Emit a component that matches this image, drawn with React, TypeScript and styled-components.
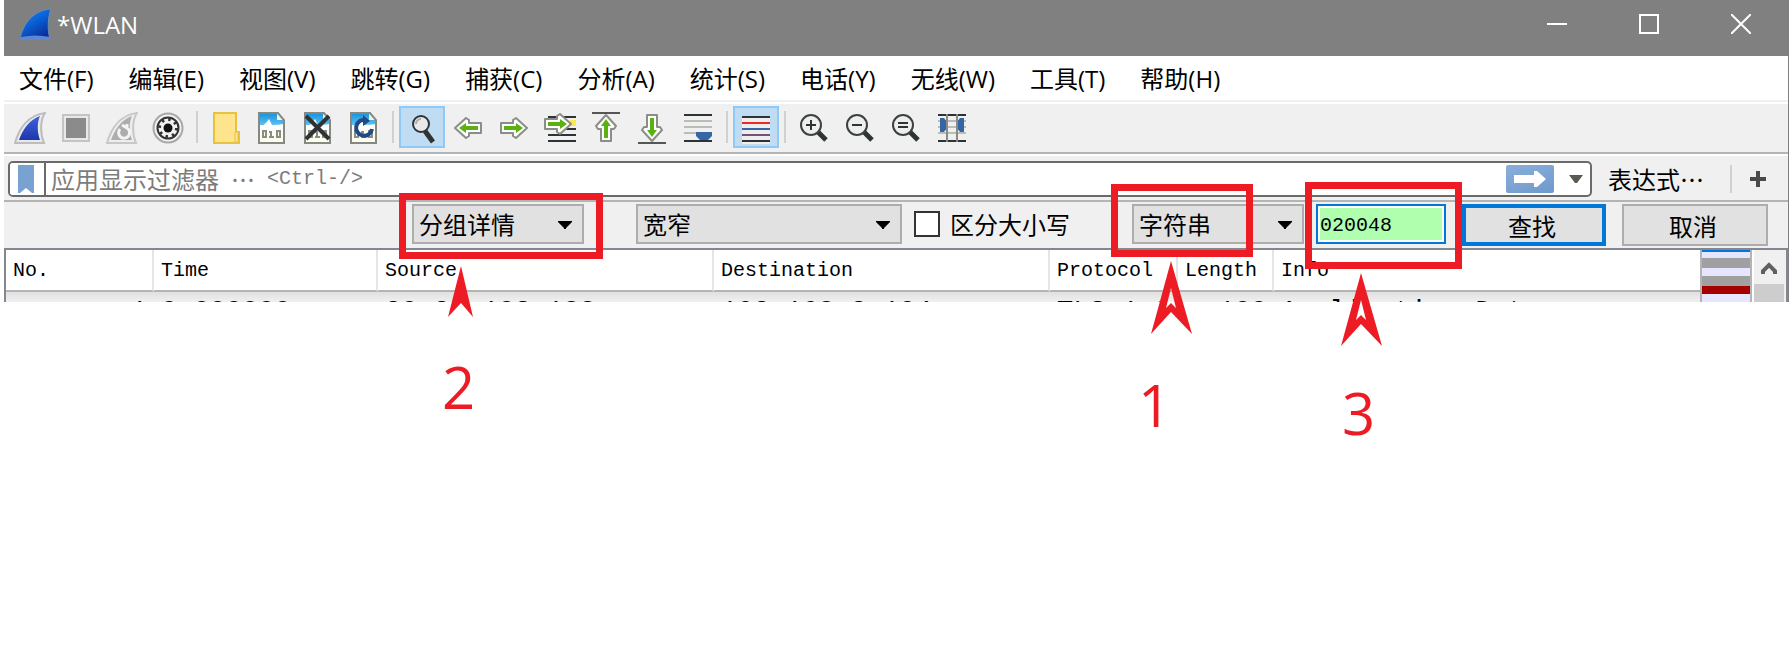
import React from 'react';
import styled, { createGlobalStyle } from 'styled-components';

const sans = `"Open Sans", "Noto Sans CJK SC", sans-serif`;
const mono = `"Liberation Mono", "Noto Sans CJK SC", monospace`;
const cjk = `"Noto Sans CJK SC", sans-serif`;
const markRed = '#ed1c24';

const GlobalStyle = createGlobalStyle`
  * { box-sizing: border-box; }
  body { margin: 0; background: #fff; color: #000; font-family: ${sans}; }
  button, select, input { font: inherit; color: inherit; margin: 0; border-radius: 0; }
  svg { display: block; flex: none; }
`;

const Page = styled.div`
  min-height: 100vh;
  padding: 0 3px 0 4px;
`;

const Window = styled.div`
  background: #f0f0f0;
`;

const TitleBar = styled.header`
  display: flex;
  align-items: flex-start;
  height: 56px;
  padding: 8px 22px 0 15px;
  background: #808080;
  color: #fff;
`;

const Title = styled.h1`
  flex: 1;
  margin: 0 0 0 6px;
  font-size: 24px;
  line-height: 34px;
  font-weight: 400;
`;

const CaptionButton = styled.button`
  width: 92px;
  height: 32px;
  padding: 0;
  border: 0;
  background: none;
  display: flex;
  align-items: center;
  justify-content: center;
  &:last-child { width: 72px; justify-content: flex-end; padding-right: 16px; }
`;

const Body = styled.main`
  border-right: 1px solid #808080;
`;

const MenuBar = styled.nav`
  display: flex;
  gap: 35px;
  height: 48px;
  padding: 0 15px;
  background: #fff;
  border-bottom: 2px solid #fff;
  box-shadow: inset 0 -2px 0 #f0f0f0;
`;

const MenuItem = styled.button`
  border: 0;
  padding: 0;
  background: none;
  font-size: 24px;
  line-height: 44px;
  white-space: nowrap;
`;

const ToolBar = styled.div`
  display: flex;
  align-items: center;
  height: 50px;
  padding: 0 3px 2px;
  border-bottom: 2px solid #b4b4b4;
`;

const Tool = styled.button<{ $active?: boolean }>`
  display: flex;
  align-items: center;
  justify-content: center;
  width: 46px;
  height: 42px;
  padding: 2px 0 0;
  border: 2px solid ${(p) => (p.$active ? '#90c8f6' : 'transparent')};
  background: ${(p) => (p.$active ? '#c0dcf3' : 'transparent')};
`;

const Divider = styled.span<{ $gap: number; $tall: number }>`
  width: 2px;
  height: ${(p) => p.$tall}px;
  margin: 0 ${(p) => p.$gap}px;
  background: #d0d0d0;
`;

const FilterBar = styled.div`
  display: flex;
  align-items: center;
  height: 48px;
  padding: 2px 22px 0 4px;
  border-top: 2px solid #fff;
  border-bottom: 2px solid #b4b4b4;
`;

const FilterBox = styled.div`
  position: relative;
  flex: 1;
  display: flex;
  align-items: center;
  height: 36px;
  border: 2px solid #6a6a6a;
  border-radius: 5px;
  background: #fff;
  overflow: hidden;
`;

const Bookmark = styled.button`
  display: flex;
  align-items: center;
  justify-content: center;
  width: 36px;
  height: 32px;
  padding: 0 2px 0 0;
  border: 0;
  border-right: 2px solid #6a6a6a;
  background: #fff;
`;

const FilterInput = styled.input`
  flex: 1;
  min-width: 0;
  height: 32px;
  padding: 0 6px;
  border: 0;
  outline: 0;
  background: transparent;
  font-family: ${mono};
  font-size: 24px;
`;

const FilterHint = styled.label`
  position: absolute;
  left: 41px;
  display: flex;
  gap: 12px;
  font-family: ${cjk};
  font-size: 24px;
  line-height: 32px;
  color: #7c7c7c;
  white-space: nowrap;
`;

const Keys = styled.span`
  font-family: ${mono};
  font-size: 20px;
`;

const Apply = styled.button`
  display: flex;
  align-items: center;
  justify-content: center;
  width: 48px;
  height: 28px;
  padding: 0;
  border: 0;
  border-radius: 2px;
  background: linear-gradient(160deg, #8aaedb, #6f9acb);
`;

const History = styled.button`
  width: 36px;
  height: 32px;
  padding: 0 6px 0 14px;
  border: 0;
  background: none;
`;

const Expression = styled.button`
  margin: 0 8px 0 16px;
  padding: 0;
  border: 0;
  background: none;
  font-family: ${cjk};
  font-size: 24px;
  line-height: 36px;
`;

const AddFilter = styled.button`
  padding: 0;
  border: 0;
  background: none;
`;

const SearchBar = styled.form`
  display: flex;
  justify-content: flex-end;
  align-items: flex-start;
  height: 46px;
  padding: 2px 20px 0 0;
`;

const Field = styled.div<{ $width: number; $before: number }>`
  position: relative;
  width: ${(p) => p.$width}px;
  margin-left: ${(p) => p.$before}px;
`;

const Select = styled.select`
  appearance: none;
  display: block;
  width: 100%;
  height: 40px;
  padding: 0 30px 0 5px;
  border: 2px solid #adadad;
  background: #e1e1e1;
  font-family: ${cjk};
  font-size: 24px;
  line-height: 36px;
`;

const Caret = styled.svg`
  position: absolute;
  right: 12px;
  top: 16px;
  pointer-events: none;
`;

const CheckLabel = styled.label`
  display: flex;
  align-items: center;
  gap: 10px;
  height: 40px;
  margin-left: 12px;
  font-family: ${cjk};
  font-size: 24px;
  line-height: 36px;
`;

const CheckBox = styled.input`
  appearance: none;
  width: 26px;
  height: 26px;
  border: 2px solid #333;
  background: #fff;
`;

const SearchInput = styled.input`
  display: block;
  width: 100%;
  height: 40px;
  padding: 2px 2px 0;
  border: 2px solid #0078d7;
  outline: 0;
  background: #afffaf;
  box-shadow: inset 0 0 0 2px #fff;
  font-family: ${mono};
  font-size: 20px;
`;

const PushButton = styled.button<{ $primary?: boolean }>`
  width: ${(p) => (p.$primary ? 144 : 146)}px;
  height: 42px;
  margin-left: 16px;
  padding: 2px 4px 0 0;
  border: ${(p) => (p.$primary ? '4px solid #0078d7' : '2px solid #adadad')};
  background: #e1e1e1;
  font-family: ${cjk};
  font-size: 24px;
  line-height: 32px;
`;

/* Red call-outs anchored to the search fields they explain. */
const Frame = styled.span<{ $t: number; $l: number; $w: number; $h: number }>`
  position: absolute;
  z-index: 2;
  top: ${(p) => p.$t}px;
  left: ${(p) => p.$l}px;
  width: ${(p) => p.$w}px;
  height: ${(p) => p.$h}px;
  border: 7px solid ${markRed};
  pointer-events: none;
`;

const Pointer = styled.svg<{ $t: number; $l: number }>`
  position: absolute;
  z-index: 2;
  top: ${(p) => p.$t}px;
  left: ${(p) => p.$l}px;
  fill: ${markRed};
  pointer-events: none;
`;

const Step = styled.span<{ $t: number; $l: number }>`
  position: absolute;
  z-index: 2;
  top: ${(p) => p.$t}px;
  left: ${(p) => p.$l}px;
  color: ${markRed};
  font-size: 58px;
  line-height: 60px;
`;

const PacketPane = styled.section`
  display: flex;
  height: 54px;
  border: 2px solid #828790;
  border-bottom: 0;
  overflow: hidden;
`;

const PacketTable = styled.table`
  flex: 1;
  table-layout: fixed;
  border-collapse: separate;
  border-spacing: 0;
  background: linear-gradient(#e0e0e0, #f0f0f0) 0 42px / 100% 10px no-repeat;
`;

const HeadCell = styled.th<{ $width?: number }>`
  width: ${(p) => (p.$width ? `${p.$width}px` : 'auto')};
  height: 42px;
  padding: 5px 0 3px 7px;
  border-right: 2px solid #e5e5e5;
  border-bottom: 2px solid #b4b4b4;
  background: #fff;
  font: 400 20px/32px ${mono};
  text-align: left;
  white-space: nowrap;
  &:last-child { border-right: 0; }
`;

const Cell = styled.td<{ $right?: boolean }>`
  padding: 5px 7px 0;
  font: 400 27px/30px ${mono};
  text-align: ${(p) => (p.$right ? 'right' : 'left')};
  vertical-align: top;
  white-space: nowrap;
`;

const MiniMap = styled.div`
  width: 52px;
  height: 52px;
  border: solid #b4b4b4;
  border-width: 0 2px;
  background: linear-gradient(
    #0078d7 0 2px, #e6e6ff 2px 8px, #a0a0a0 8px 18px, #e6e6ff 18px 26px,
    #a0a0a0 26px 36px, #a40000 36px 44px, #e6e6ff 44px
  );
`;

const ScrollBar = styled.div`
  width: 34px;
  border-left: 2px solid #fff;
`;

const ScrollUp = styled.button`
  display: flex;
  align-items: center;
  justify-content: center;
  width: 30px;
  height: 34px;
  padding: 4px 0 0;
  border: 0;
  background: none;
`;

const Thumb = styled.div`
  width: 30px;
  height: 18px;
  background: #cdcdcd;
`;

const Icon = ({ children }: { children: React.ReactNode }) => (
  <svg width="32" height="32" viewBox="0 0 32 32" aria-hidden="true">{children}</svg>
);

const finPath = 'M1 31C5 17 14 3 31 1C26 8 26 22 30 31Z';
const finInner = 'M5 28C9 17 15 8 26 4C23 10 23 20 26 28Z';

const TitleFin = () => (
  <Icon>
    <defs>
      <linearGradient id="fin" x1="0" y1="0" x2="0.6" y2="1">
        <stop offset="0" stopColor="#1c86f0" /><stop offset="0.5" stopColor="#0a62d8" /><stop offset="1" stopColor="#0a2f9c" />
      </linearGradient>
    </defs>
    <path d="M1 31C4 16 14 2 32 1C29 8 28 22 31 31Z" fill="url(#fin)" stroke="#6c8fae" />
    <path d="M2 29Q16 26 31 29V32H1Z" fill="#5c86d6" />
  </Icon>
);

const StartIcon = () => (
  <Icon>
    <defs>
      <linearGradient id="start" x1="0" y1="0" x2="0" y2="1">
        <stop offset="0" stopColor="#3f62dd" /><stop offset="1" stopColor="#1e37ab" />
      </linearGradient>
    </defs>
    <path d={finPath} fill="#e9e9e9" stroke="#bdbdbd" strokeWidth="2" />
    <path d={finInner} fill="url(#start)" />
  </Icon>
);

const StopIcon = () => (
  <Icon>
    <rect x="3" y="3" width="26" height="26" fill="#e8e8e8" stroke="#c4c4c4" strokeWidth="2" />
    <rect x="6" y="6" width="20" height="20" fill="#8b8b8b" />
  </Icon>
);

const RestartIcon = () => (
  <Icon>
    <path d={finPath} fill="#eee" stroke="#c8c8c8" strokeWidth="2" />
    <path d={finInner} fill="#adadad" />
    <path d="M14 17A5.500 5.500 0 1 0 21 16M21 16V12M21 16L16 13" fill="none" stroke="#f4f4f4" strokeWidth="3" />
  </Icon>
);

const OptionsIcon = () => (
  <Icon>
    <circle cx="16" cy="16" r="14.500" fill="#f2f2f2" stroke="#a8a8a8" strokeWidth="2" />
    <circle cx="16" cy="16" r="10.500" fill="none" stroke="#333" strokeWidth="2" />
    <circle cx="16" cy="16" r="8.500" fill="none" stroke="#333" strokeWidth="3" strokeDasharray="2.500 4.170" />
    <circle cx="16" cy="16" r="4.500" fill="#111" />
  </Icon>
);

const FolderIcon = () => (
  <Icon>
    <path d="M4 1H26V20H29V31H4Z" fill="#ffe48e" stroke="#e8c23e" strokeWidth="2" />
    <path d="M25 30V20H28V30Z" fill="#ffe48e" stroke="#e8c23e" />
  </Icon>
);

const Sheet = ({ children }: { children: React.ReactNode }) => (
  <Icon>
    <defs>
      <linearGradient id="sheet" x1="0" y1="0" x2="0" y2="1">
        <stop offset="0" stopColor="#1591db" /><stop offset="1" stopColor="#5fc0f2" />
      </linearGradient>
    </defs>
    <path d="M3 1H22L28 8V31H3Z" fill="#fdfdf0" />
    <path d="M3 1H22L28 8V13H3Z" fill="url(#sheet)" />
    <path d="M3 16Q9 13 13 7L16 13Q22 13 28 12V17H3Z" fill="#fff" />
    <path d="M21 1V8H28Z" fill="#f4f4da" />
    <path d="M3 1H22L28 8V31H3Z" fill="none" stroke="#868882" strokeWidth="2" />
    {children}
  </Icon>
);

const Bits = () => (
  <g fill="none" stroke="#8c8c84" strokeWidth="2">
    <rect x="7" y="19" width="3" height="6" />
    <path d="M13 20H15V25M13 25H18" />
    <rect x="21" y="19" width="3" height="6" />
  </g>
);

const FindIcon = () => (
  <Icon>
    <path d="M19 19L27 30" stroke="#2e3436" strokeWidth="5" />
    <circle cx="15" cy="12" r="8" fill="#e8e9ea" stroke="#2e3436" strokeWidth="2" />
    <path d="M10 12A5 5 0 0 1 15 7" fill="none" stroke="#aaa" strokeWidth="2" />
  </Icon>
);

const Arrow = ({ turn = 0, x = 0, y = 0 }: { turn?: number; x?: number; y?: number }) => (
  <g transform={`translate(${x} ${y}) rotate(${turn} 16 16)`}>
    <path d="M3 11H15V8L18 6L29 16L18 26L15 24V21H3Z" fill="#fff" stroke="#8b8d87" strokeWidth="2" strokeLinejoin="round" />
    <path d="M6 14H18V11L25 16L18 21V18H6Z" fill="#5bb012" />
  </g>
);

const GotoIcon = () => (
  <Icon>
    <path d="M4 5H32M4 17H32M4 23H32M4 29H32" stroke="#2e3436" strokeWidth="2" />
    <rect x="26" y="8" width="6" height="6" fill="#fce94f" />
    <Arrow x={-2} y={-4} />
  </Icon>
);

const FirstIcon = () => (
  <Icon><path d="M2 1H30" stroke="#555753" strokeWidth="2" /><Arrow turn={-90} /></Icon>
);

const LastIcon = () => (
  <Icon><path d="M2 31H30" stroke="#555753" strokeWidth="2" /><Arrow turn={90} /></Icon>
);

const ScrollIcon = () => (
  <Icon>
    <path d="M2 3H30M2 29H30" stroke="#2e3436" strokeWidth="2" />
    <path d="M2 9H30M2 15H30M2 21H14" stroke="#babdb6" strokeWidth="2" />
    <path d="M14 20H30V24L26 28H18L14 24Z" fill="#3465a4" />
  </Icon>
);

const ColorizeIcon = () => (
  <Icon>
    <rect x="2" y="4" width="28" height="28" fill="#eeeeec" />
    <path d="M2 5H30M2 29H30" stroke="#2e3436" strokeWidth="2" />
    <path d="M2 11H30" stroke="#ef2929" strokeWidth="2" />
    <path d="M2 17H30" stroke="#3465a4" strokeWidth="2" />
    <path d="M2 23H30" stroke="#75507b" strokeWidth="2" />
  </Icon>
);

const ZoomIcon = ({ sign }: { sign: string }) => (
  <Icon>
    <path d="M20 20L28 28" stroke="#2e3436" strokeWidth="5" />
    <circle cx="13" cy="13" r="10" fill="#eeeeec" stroke="#3b4143" strokeWidth="2" />
    <path d={sign} stroke="#2e3436" strokeWidth="2" />
  </Icon>
);

const ColumnsIcon = () => (
  <Icon>
    <path d="M2 9H30M2 15H30M2 21H30" stroke="#babdb6" strokeWidth="2" />
    <path d="M2 3H30M2 29H30" stroke="#2e3436" strokeWidth="2" />
    <path d="M4 6H8L11 10V16L8 20H4ZM28 6H24L21 10V16L24 20H28Z" fill="#3465a4" />
    <path d="M11 2V30M21 2V30" stroke="#888a85" strokeWidth="2" />
  </Icon>
);

const DownCaret = () => (
  <Caret width="14" height="9" viewBox="0 0 14 9" aria-hidden="true">
    <path d="M0 1H14V2L8 8V9H6V8L0 2Z" />
  </Caret>
);

type ToolSpec = { name: string; icon: React.ReactNode; active?: boolean };

const toolGroups: ToolSpec[][] = [
  [
    { name: '开始捕获', icon: <StartIcon /> },
    { name: '停止捕获', icon: <StopIcon /> },
    { name: '重新捕获', icon: <RestartIcon /> },
    { name: '捕获选项', icon: <OptionsIcon /> },
  ],
  [
    { name: '打开', icon: <FolderIcon /> },
    { name: '保存', icon: <Sheet><Bits /></Sheet> },
    { name: '关闭文件', icon: <Sheet><Bits /><path d="M4 4L27 27M27 4L4 27" stroke="#2e3436" strokeWidth="4" /></Sheet> },
    { name: '重新加载', icon: <Sheet><Bits /><path d="M18 8A8 8 0 1 0 24 17" fill="none" stroke="#204a87" strokeWidth="4" /><path d="M15 3L22 9L15 14Z" fill="#204a87" /></Sheet> },
  ],
  [
    { name: '查找分组', icon: <FindIcon />, active: true },
    { name: '上一个', icon: <Icon><Arrow turn={180} /></Icon> },
    { name: '下一个', icon: <Icon><Arrow /></Icon> },
    { name: '转到分组', icon: <GotoIcon /> },
    { name: '首个分组', icon: <FirstIcon /> },
    { name: '最后分组', icon: <LastIcon /> },
    { name: '自动滚动', icon: <ScrollIcon /> },
  ],
  [{ name: '着色', icon: <ColorizeIcon />, active: true }],
  [
    { name: '放大', icon: <ZoomIcon sign="M8 13H18M13 8V18" /> },
    { name: '缩小', icon: <ZoomIcon sign="M8 13H18" /> },
    { name: '正常大小', icon: <ZoomIcon sign="M8 11H18M8 15H18" /> },
    { name: '调整列宽', icon: <ColumnsIcon /> },
  ],
];

const menus = ['文件(F)', '编辑(E)', '视图(V)', '跳转(G)', '捕获(C)', '分析(A)', '统计(S)', '电话(Y)', '无线(W)', '工具(T)', '帮助(H)'];

const columns: { title: string; width?: number; value: string; right?: boolean }[] = [
  { title: 'No.', width: 148, value: '1', right: true },
  { title: 'Time', width: 224, value: '0.000000' },
  { title: 'Source', width: 336, value: '20.21.103.188' },
  { title: 'Destination', width: 336, value: '192.168.2.104' },
  { title: 'Protocol', width: 128, value: 'TLSv1.2' },
  { title: 'Length', width: 96, value: '100', right: true },
  { title: 'Info', value: 'Application Data' },
];

const hollowArrow = 'M20 0L41 73L20 51L0 73ZM20 27L15 47L20 42L25 47Z';

export default function App() {
  return (
    <Page>
      <GlobalStyle />
      <Window lang="zh-CN">
        <TitleBar>
          <TitleFin />
          <Title>*WLAN</Title>
          <CaptionButton aria-label="最小化">
            <svg width="20" height="20" viewBox="0 0 20 20"><path d="M0 10H20" stroke="#fff" strokeWidth="2" /></svg>
          </CaptionButton>
          <CaptionButton aria-label="最大化">
            <svg width="20" height="20" viewBox="0 0 20 20"><rect x="1" y="1" width="18" height="18" fill="none" stroke="#fff" strokeWidth="2" /></svg>
          </CaptionButton>
          <CaptionButton aria-label="关闭">
            <svg width="20" height="20" viewBox="0 0 20 20"><path d="M0 0L20 20M20 0L0 20" stroke="#fff" strokeWidth="2" /></svg>
          </CaptionButton>
        </TitleBar>
        <Body>
          <MenuBar>
            {menus.map((m) => <MenuItem key={m}>{m}</MenuItem>)}
          </MenuBar>
          <ToolBar>
            {toolGroups.map((group, i) => (
              <React.Fragment key={i}>
                {i > 0 && <Divider $gap={5} $tall={32} />}
                {group.map((t) => (
                  <Tool key={t.name} aria-label={t.name} $active={t.active}>{t.icon}</Tool>
                ))}
              </React.Fragment>
            ))}
          </ToolBar>
          <FilterBar>
            <FilterBox>
              <Bookmark aria-label="书签">
                <svg width="16" height="28" viewBox="0 0 16 28"><path d="M0 0H16V28H14L8 23L2 28H0Z" fill="#78a2d2" /></svg>
              </Bookmark>
              <FilterInput id="display-filter" />
              <FilterHint htmlFor="display-filter">
                <span>应用显示过滤器</span><span>…</span><Keys>&lt;Ctrl-/&gt;</Keys>
              </FilterHint>
              <Apply aria-label="应用">
                <svg width="32" height="16" viewBox="0 0 32 16"><path d="M0 4H20V0H23L32 8L23 16H20V12H0Z" fill="#fff" /></svg>
              </Apply>
              <History aria-label="历史">
                <svg width="16" height="8" viewBox="0 0 16 8"><path d="M1 0H15L9 8H7Z" fill="#5a5a55" /></svg>
              </History>
            </FilterBox>
            <Expression>表达式…</Expression>
            <Divider $gap={18} $tall={28} />
            <AddFilter aria-label="添加">
              <svg width="16" height="16" viewBox="0 0 16 16"><path d="M0 8H16M8 0V16" stroke="#4a4a4a" strokeWidth="4" /></svg>
            </AddFilter>
          </FilterBar>
          <SearchBar onSubmit={(e) => e.preventDefault()}>
            <Field $width={172} $before={0}>
              <Select aria-label="查找范围"><option>分组详情</option></Select>
              <DownCaret />
              <Frame $t={-11} $l={-13} $w={204} $h={66} />
              <Pointer $t={62} $l={36} width="26" height="51" viewBox="0 0 26 51"><path d="M13 0L25 51L13 37L0 51Z" /></Pointer>
              <Step $t={153} $l={30}>2</Step>
            </Field>
            <Field $width={266} $before={52}>
              <Select aria-label="字符宽度"><option>宽窄</option></Select>
              <DownCaret />
            </Field>
            <CheckLabel><CheckBox type="checkbox" />区分大小写</CheckLabel>
            <Field $width={172} $before={62}>
              <Select aria-label="查找类型"><option>字符串</option></Select>
              <DownCaret />
              <Frame $t={-20} $l={-21} $w={142} $h={73} />
              <Pointer $t={57} $l={19} width="41" height="74" viewBox="0 0 41 74" fillRule="evenodd"><path d={hollowArrow} /></Pointer>
              <Step $t={171} $l={6}>1</Step>
            </Field>
            <Field $width={130} $before={12}>
              <SearchInput aria-label="查找内容" defaultValue="020048" />
              <Frame $t={-22} $l={-11} $w={157} $h={87} />
              <Pointer $t={69} $l={25} width="41" height="74" viewBox="0 0 41 74" fillRule="evenodd"><path d={hollowArrow} /></Pointer>
              <Step $t={179} $l={26}>3</Step>
            </Field>
            <PushButton $primary type="submit">查找</PushButton>
            <PushButton type="button">取消</PushButton>
          </SearchBar>
          <PacketPane>
            <PacketTable>
              <thead>
                <tr>{columns.map((c) => <HeadCell key={c.title} $width={c.width}>{c.title}</HeadCell>)}</tr>
              </thead>
              <tbody>
                <tr>{columns.map((c) => <Cell key={c.title} $right={c.right}>{c.value}</Cell>)}</tr>
              </tbody>
            </PacketTable>
            <MiniMap />
            <ScrollBar>
              <ScrollUp aria-label="向上滚动">
                <svg width="16" height="14" viewBox="0 0 16 14"><path d="M2 12V9L8 3L14 9V12" fill="none" stroke="#606060" strokeWidth="4" /></svg>
              </ScrollUp>
              <Thumb />
            </ScrollBar>
          </PacketPane>
        </Body>
      </Window>
    </Page>
  );
}
